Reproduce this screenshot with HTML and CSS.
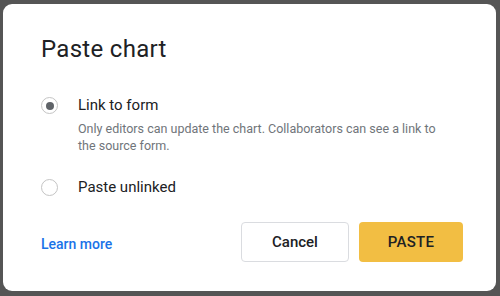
FILE: index.html
```html
<!DOCTYPE html>
<html>
<head>
<meta charset="utf-8">
<link rel="stylesheet" href="styles.css">
</head>
<body>
<div class="dialog">
  <h1 class="title">Paste chart</h1>
  <div class="options">
    <div class="option">
      <span class="radio checked"></span>
      <div class="option-text">
        <div class="label">Link to form</div>
        <div class="desc">Only editors can update the chart. Collaborators can see a link to the source form.</div>
      </div>
    </div>
    <div class="option second">
      <span class="radio"></span>
      <div class="option-text">
        <div class="label">Paste unlinked</div>
      </div>
    </div>
  </div>
  <div class="footer">
    <a class="learn">Learn more</a>
    <div class="buttons">
      <button class="btn cancel">Cancel</button>
      <button class="btn paste">PASTE</button>
    </div>
  </div>
</div>
</body>
</html>
```
FILE: styles.css
```css
html, body {
  margin: 0;
  padding: 0;
  background: #555555;
}
body {
  width: 500px;
  height: 296px;
  overflow: hidden;
  padding: 4px 4px 5px 3px;
  box-sizing: border-box;
  font-family: Roboto, "Liberation Sans", Arial, sans-serif;
}
.dialog {
  width: 493px;
  height: 287px;
  background: #ffffff;
  border-radius: 9px;
  box-sizing: border-box;
  padding: 30px 33px 0 38px;
  display: flex;
  flex-direction: column;
}
.title {
  margin: 0;
  font-size: 24px;
  line-height: 30px;
  font-weight: 400;
  color: #202124;
  letter-spacing: 0.3px;
}
.options {
  margin-top: 33px;
  display: flex;
  flex-direction: column;
}
.option {
  display: flex;
  align-items: flex-start;
  gap: 20px;
}
.option.second {
  margin-top: 25px;
}
.radio {
  width: 17px;
  height: 17px;
  box-sizing: border-box;
  border: 1.5px solid #c4c4c4;
  border-radius: 50%;
  display: flex;
  align-items: center;
  justify-content: center;
  flex: none;
}
.radio.checked::after {
  content: "";
  width: 8px;
  height: 8px;
  border-radius: 50%;
  background: #5f6368;
}
.label {
  font-size: 15px;
  line-height: 17px;
  color: #202124;
}
.desc {
  margin-top: 6px;
  font-size: 12.5px;
  line-height: 17px;
  color: #70757a;
  width: 370px;
}
.footer {
  margin-top: auto;
  margin-bottom: 29px;
  display: flex;
  align-items: center;
  justify-content: space-between;
}
.learn {
  font-size: 14px;
  font-weight: 500;
  color: #1a73e8;
  margin-top: 4px;
}
.buttons {
  display: flex;
  gap: 10px;
}
.btn {
  height: 40px;
  border-radius: 4px;
  font-family: Roboto, "Liberation Sans", Arial, sans-serif;
  font-size: 15px;
  font-weight: 500;
  color: #202124;
  padding: 0;
}
.cancel {
  width: 108px;
  background: #ffffff;
  border: 1px solid #dadce0;
}
.paste {
  width: 104px;
  background: #f2be43;
  border: none;
  letter-spacing: 0.3px;
}
```
